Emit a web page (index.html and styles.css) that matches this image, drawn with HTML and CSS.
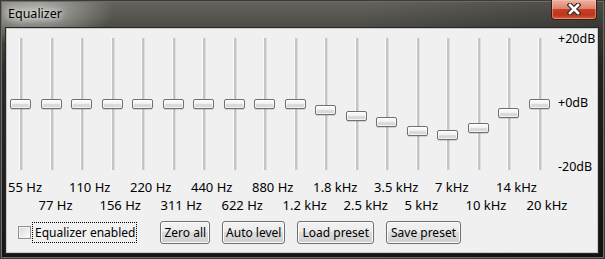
FILE: index.html
```html
<!DOCTYPE html>
<html>

<head>
    <title>Equalizer</title>
    <link rel="stylesheet" href="styles.css">
</head>

<body>
    <div class="window">
        <div class="titlebar">
            <span class="title">Equalizer</span>
            <button class="close-btn" title="Close">
                <svg width="14" height="12" viewBox="0 0 14 12">
                    <path d="M3 2 L11 10 M11 2 L3 10" stroke="#3b2a28" stroke-width="5" stroke-linecap="square" fill="none"/>
                    <path d="M3 2 L11 10 M11 2 L3 10" stroke="#fff" stroke-width="2.6" stroke-linecap="square" fill="none"/>
                </svg>
            </button>
        </div>

        <div class="client">
            <!-- one slider per band, top = thumb position -->
            <div class="bands">
                <div class="band"><div class="track"></div><div class="thumb" style="top: 70px"></div></div>
                <div class="band"><div class="track"></div><div class="thumb" style="top: 70px"></div></div>
                <div class="band"><div class="track"></div><div class="thumb" style="top: 70px"></div></div>
                <div class="band"><div class="track"></div><div class="thumb" style="top: 70px"></div></div>
                <div class="band"><div class="track"></div><div class="thumb" style="top: 70px"></div></div>
                <div class="band"><div class="track"></div><div class="thumb" style="top: 70px"></div></div>
                <div class="band"><div class="track"></div><div class="thumb" style="top: 70px"></div></div>
                <div class="band"><div class="track"></div><div class="thumb" style="top: 70px"></div></div>
                <div class="band"><div class="track"></div><div class="thumb" style="top: 70px"></div></div>
                <div class="band"><div class="track"></div><div class="thumb" style="top: 70px"></div></div>
                <div class="band"><div class="track"></div><div class="thumb" style="top: 76px"></div></div>
                <div class="band"><div class="track"></div><div class="thumb" style="top: 82px"></div></div>
                <div class="band"><div class="track"></div><div class="thumb" style="top: 88px"></div></div>
                <div class="band"><div class="track"></div><div class="thumb" style="top: 97px"></div></div>
                <div class="band"><div class="track"></div><div class="thumb" style="top: 101px"></div></div>
                <div class="band"><div class="track"></div><div class="thumb" style="top: 94px"></div></div>
                <div class="band"><div class="track"></div><div class="thumb" style="top: 79px"></div></div>
                <div class="band"><div class="track"></div><div class="thumb" style="top: 70px"></div></div>

                <div class="db-scale">
                    <span>+20dB</span>
                    <span>+0dB</span>
                    <span>-20dB</span>
                </div>
            </div>

            <div class="freq-row">
                <span>55 Hz</span>
                <span>110 Hz</span>
                <span>220 Hz</span>
                <span>440 Hz</span>
                <span>880 Hz</span>
                <span>1.8 kHz</span>
                <span>3.5 kHz</span>
                <span>7 kHz</span>
                <span>14 kHz</span>
            </div>
            <div class="freq-row lower">
                <span>77 Hz</span>
                <span>156 Hz</span>
                <span>311 Hz</span>
                <span>622 Hz</span>
                <span>1.2 kHz</span>
                <span>2.5 kHz</span>
                <span>5 kHz</span>
                <span>10 kHz</span>
                <span>20 kHz</span>
            </div>

            <div class="controls">
                <label class="check">
                    <span class="check-box"></span>
                    <span class="check-text">Equalizer enabled</span>
                </label>
                <button class="btn">Zero all</button>
                <button class="btn">Auto level</button>
                <button class="btn wide">Load preset</button>
                <button class="btn wide">Save preset</button>
            </div>
        </div>
    </div>
</body>

</html>
```

FILE: styles.css
```css
body {
    margin: 0;
    font-family: "Noto Sans", "Liberation Sans", sans-serif;
    font-size: 13px;
    color: #000;
}

.window {
    width: 605px;
    height: 259px;
    box-sizing: border-box;
    padding: 0 7px 6px 6px;
    display: flex;
    flex-direction: column;
    background:
        radial-gradient(ellipse 80px 34px at 34px 12px, rgba(210, 210, 204, 0.75), rgba(210, 210, 204, 0) 100%),
        linear-gradient(to right, rgba(0, 0, 0, 0) 60%, rgba(0, 0, 0, 0.25) 100%),
        linear-gradient(to bottom, #66655f 0, #4a4944 28px, #2c2c2a 70px, #161616 100%);
    box-shadow: inset 0 0 0 1px #3a3a38, inset 0 0 0 2px #6d6d6a;
}

.titlebar {
    height: 28px;
    flex: none;
    display: flex;
    justify-content: space-between;
    align-items: flex-start;
}

.title {
    margin: 6px 0 0 2px;
    font-size: 12.5px;
    line-height: 16px;
    text-shadow: 0 0 6px #fff, 0 0 10px rgba(255, 255, 255, 0.8);
}

.close-btn {
    width: 46px;
    height: 20px;
    margin-right: 1px;
    padding: 0;
    border: 1px solid #3a1d16;
    border-top: none;
    border-radius: 0 0 4px 4px;
    background: linear-gradient(to bottom, #ecb3a3 0, #dd836d 45%, #c83f22 50%, #bd361b 80%, #d8623c 100%);
    box-shadow: inset 0 0 0 1px rgba(255, 200, 180, 0.45);
    display: flex;
    align-items: center;
    justify-content: center;
}

.close-btn svg {
    display: block;
    margin-top: -1px;
}

.client {
    flex: 1;
    background-color: #f0f0f0;
    border: 1px solid #c9c9c9;
    box-shadow: 0 0 0 1px #262626;
    padding-left: 1px;
    display: flex;
    flex-direction: column;
}

.bands {
    display: grid;
    grid-template-columns: repeat(18, 30.5px) 40px;
    height: 149px;
}

.band {
    position: relative;
}

.track {
    position: absolute;
    left: 11px;
    top: 9px;
    width: 2px;
    height: 132px;
    background-color: #c4c4c4;
    border-left: 1px solid #fbfbfb;
    border-right: 1px solid #dedede;
}

.thumb {
    position: absolute;
    left: 2px;
    width: 21px;
    height: 10px;
    box-sizing: border-box;
    border: 1px solid #6f6f6f;
    border-radius: 2px;
    background: linear-gradient(to bottom, #fdfdfd 0, #f1f1f1 45%, #dcdcdc 55%, #d4d4d4 100%);
    box-shadow: 0 1px 0 rgba(0, 0, 0, 0.12), inset 0 0 0 1px rgba(255, 255, 255, 0.7);
}

.db-scale {
    display: flex;
    flex-direction: column;
    justify-content: space-between;
    padding: 3px 0 0 1px;
    height: 145px;
    box-sizing: border-box;
    font-size: 12.5px;
    line-height: 14px;
    white-space: nowrap;
}

.freq-row {
    display: grid;
    grid-template-columns: repeat(9, 61px);
    line-height: 18px;
    white-space: nowrap;
}

.freq-row.lower {
    padding-left: 30.5px;
}

.controls {
    display: flex;
    align-items: center;
    margin-top: 7px;
    padding-left: 10px;
    font-size: 12px;
}

.check {
    display: flex;
    align-items: center;
}

.check-box {
    width: 13px;
    height: 13px;
    box-sizing: border-box;
    border: 1px solid #8e8f8f;
    background: linear-gradient(135deg, #d6d6d6 0, #eeeeee 60%, #fbfbfb 100%);
    box-shadow: inset 0 0 0 1px #f4f4f4;
}

.check-text {
    margin-left: 2px;
    padding: 0 1px 0 2px;
    line-height: 19px;
    outline: 1px dotted #000;
}

.btn {
    height: 23px;
    margin-left: 12px;
    padding: 0 3px;
    font-family: inherit;
    font-size: 12px;
    color: #000;
    border: 1px solid #707070;
    border-radius: 3px;
    background: linear-gradient(to bottom, #f2f2f2 0, #ebebeb 50%, #dddddd 50%, #cfcfcf 100%);
    box-shadow: inset 0 0 0 1px #fcfcfc;
}

.btn.wide {
    padding: 0 4px;
}

.check + .btn {
    margin-left: 24px;
}
```
